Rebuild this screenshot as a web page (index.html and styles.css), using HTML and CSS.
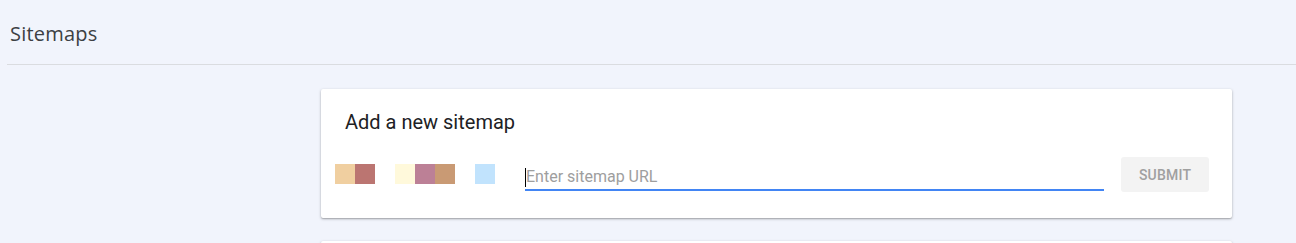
FILE: index.html
```html
<!DOCTYPE html>
<html lang="en">
<head>
<meta charset="utf-8">
<title>Sitemaps</title>
<link rel="stylesheet" href="styles.css">
</head>
<body>
<header class="page-header">
  <h1 class="page-title">Sitemaps</h1>
</header>
<main class="content">
  <section class="card">
    <h2 class="card-title">Add a new sitemap</h2>
    <div class="form-row">
      <div class="swatches">
        <div class="swatch-group">
          <span class="swatch s1"></span><span class="swatch s2"></span>
        </div>
        <div class="swatch-group">
          <span class="swatch s3"></span><span class="swatch s4"></span><span class="swatch s5"></span>
        </div>
        <div class="swatch-group">
          <span class="swatch s6"></span>
        </div>
      </div>
      <div class="url-field">
        <span class="caret"></span>
        <input class="url-input" type="text" placeholder="Enter sitemap URL">
      </div>
      <button class="submit-btn" type="button">SUBMIT</button>
    </div>
  </section>
  <section class="card card-next"></section>
</main>
</body>
</html>
```

FILE: styles.css
```css
html, body {
  margin: 0;
  padding: 0;
  background: #f1f4fc;
  font-family: Roboto, "Liberation Sans", Arial, sans-serif;
  overflow: hidden;
}

.page-header {
  margin-left: 7px;
  padding-left: 3px;
  height: 64px;
  display: flex;
  align-items: center;
  border-bottom: 1px solid #dadce0;
}

.page-title {
  margin: 0;
  font-family: "Open Sans", Roboto, sans-serif;
  font-size: 20px;
  font-weight: 400;
  letter-spacing: 0.2px;
  color: #3c4043;
  padding-top: 2px;
}

.content {
  padding-left: 321px;
  padding-top: 24px;
}

.card {
  width: 911px;
  height: 129px;
  background: #ffffff;
  border-radius: 2px;
  box-shadow: 0 1px 3px rgba(0, 0, 0, 0.28), 0 1px 1px rgba(0, 0, 0, 0.12);
  box-sizing: border-box;
  padding: 19px 23px 0 14px;
}

.card-next {
  margin-top: 23px;
}

.card-title {
  margin: 0 0 0 10px;
  font-size: 20px;
  font-weight: 400;
  color: #202124;
  line-height: 28px;
}

.form-row {
  display: flex;
  align-items: flex-start;
  margin-top: 21px;
}

.swatches {
  display: flex;
  gap: 20px;
  margin-right: 30px;
  margin-top: 7px;
}

.swatch-group {
  display: flex;
}

.swatch {
  display: block;
  width: 20px;
  height: 20px;
}

.s1 { background: #f0cfa0; }
.s2 { background: #bb7571; }
.s3 { background: #fff9db; }
.s4 { background: #bc8096; }
.s5 { background: #c99a74; }
.s6 { background: #c1e3fd; }

.url-field {
  position: relative;
  width: 579px;
  margin-right: 17px;
  margin-top: 6px;
  border-bottom: 2px solid #4285f4;
}

.url-input {
  display: block;
  width: 100%;
  box-sizing: border-box;
  border: none;
  outline: none;
  padding: 4px 0 2px 1px;
  font-family: Roboto, "Liberation Sans", sans-serif;
  font-size: 16px;
  line-height: 20px;
  background: transparent;
  color: #202124;
}

.url-input::placeholder {
  color: #9e9e9e;
}

.caret {
  position: absolute;
  left: 0;
  top: 5px;
  width: 1px;
  height: 19px;
  background: #000000;
}

.submit-btn {
  width: 88px;
  height: 35px;
  border: none;
  border-radius: 3px;
  background: #f3f3f3;
  color: #a0a0a0;
  font-family: Roboto, "Liberation Sans", sans-serif;
  font-size: 14px;
  font-weight: 500;
  letter-spacing: 0.2px;
  padding: 0;
}
```
